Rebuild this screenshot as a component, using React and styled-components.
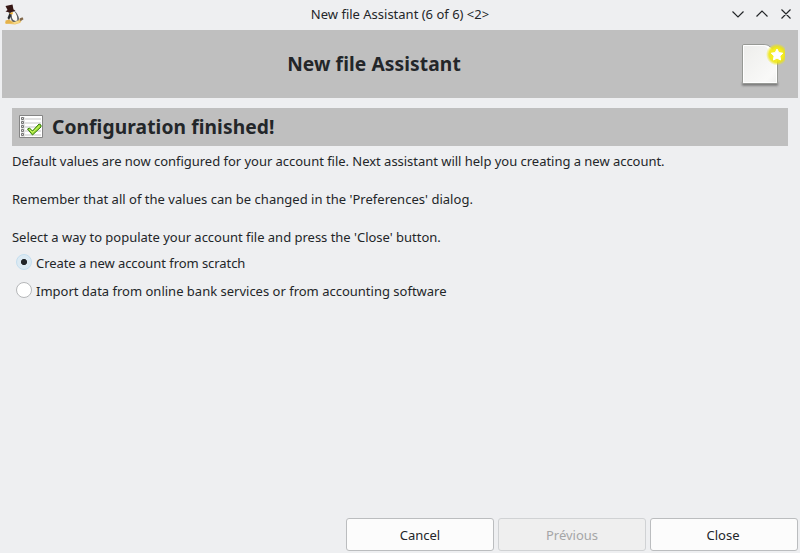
import React, { useState } from "react";
import styled, { createGlobalStyle } from "styled-components";

const GlobalStyle = createGlobalStyle`
  * { box-sizing: border-box; }
  body { margin: 0; background: #eeeff1; overflow: hidden; }
`;

const Window = styled.div`
  display: flex;
  flex-direction: column;
  width: 800px;
  height: 553px;
  padding: 0 2px 2px;
  background: #eeeff1;
  color: #232629;
  font-family: "Noto Sans", sans-serif;
  font-size: 13px;
  line-height: 19px;
`;

const TitleBar = styled.header`
  display: grid;
  grid-template-columns: 68px 1fr 68px;
  align-items: center;
  height: 30px;
`;

const WindowTitle = styled.div`
  text-align: center;
  white-space: nowrap;
  line-height: 18px;
  padding-bottom: 2px;
`;

const AppIcon = styled.svg`
  display: block;
  width: 24px;
  height: 24px;
  margin-bottom: 2px;
`;

const WindowControls = styled.svg`
  display: block;
  width: 68px;
  height: 30px;
`;

const Banner = styled.div`
  display: grid;
  grid-template-columns: 1fr 50px;
  align-items: center;
  height: 68px;
  flex: none;
  background: #bfbfbf;
`;

const BannerTitle = styled.h1`
  margin: 0;
  padding-right: 2px;
  text-align: center;
  font-size: 19.2px;
  letter-spacing: 0.1px;
  line-height: 26px;
  font-weight: 700;
`;

const DocumentIcon = styled.svg`
  display: block;
  width: 48px;
  height: 48px;
  justify-self: start;
  margin-left: -11px;
`;

const Content = styled.main`
  flex: 1;
  padding: 10px;
`;

const SectionHeading = styled.div`
  display: flex;
  align-items: center;
  gap: 9px;
  height: 38px;
  padding-left: 7px;
  background: #bfbfbf;
`;

const ChecklistIcon = styled.svg`
  display: block;
  width: 24px;
  height: 24px;
`;

const SectionTitle = styled.h2`
  margin: 0;
  font-size: 19.2px;
  letter-spacing: 0.1px;
  line-height: 26px;
  font-weight: 700;
`;

const Message = styled.div`
  display: grid;
  gap: 19px;
  padding-top: 6px;
`;

const Paragraph = styled.p`
  margin: 0;
  white-space: nowrap;
  letter-spacing: ${({ $tracking }) => $tracking || "0"};
`;

const Options = styled.div`
  display: grid;
  grid-auto-rows: 28px;
  padding: 1px 0 0 4px;
`;

const Option = styled.label`
  display: flex;
  align-items: center;
  gap: 4px;
  white-space: nowrap;
`;

const OptionText = styled.span`
  padding-top: 2px;
  letter-spacing: ${({ $tracking }) => $tracking || "0"};
`;

const Radio = styled.input.attrs({ type: "radio" })`
  appearance: none;
  width: 16px;
  height: 16px;
  margin: 0;
  border: 1px solid #b5b7b9;
  border-radius: 50%;
  background: #fff;
  &:checked {
    border-color: #c4deef;
    background: radial-gradient(circle, #232629 2.7px, #dceaf3 3.5px);
  }
`;

const Actions = styled.footer`
  display: grid;
  grid-template-columns: repeat(3, 148px);
  justify-content: end;
  gap: 4px;
`;

const Button = styled.button`
  height: 33px;
  padding: 2px 0 0;
  border: 1px solid #bbbdbf;
  border-radius: 3px;
  background: #fcfcfc;
  color: #232629;
  font: inherit;
  &:disabled {
    border-color: #d0d2d4;
    background: #efefef;
    color: #a5a6a7;
  }
  &:last-child { padding-right: 2px; }
`;

const messages = [
  {
    text: "Default values are now configured for your account file. Next assistant will help you creating a new account.",
    tracking: "-0.028px",
  },
  {
    text: "Remember that all of the values can be changed in the 'Preferences' dialog.",
    tracking: "0.024px",
  },
  {
    text: "Select a way to populate your account file and press the 'Close' button.",
    tracking: "-0.015px",
  },
];

const choices = [
  { text: "Create a new account from scratch", tracking: "-0.06px" },
  { text: "Import data from online bank services or from accounting software" },
];

export default function App() {
  const [selected, setSelected] = useState(0);
  return (
    <>
      <GlobalStyle />
      <Window>
        <TitleBar>
          <AppIcon viewBox="2 1 24 24">
            <path d="M5 22.500Q4.500 19.500 9 19.500L15 20 20 18Q22.500 20 20 22L15 23.500Z" fill="#eec66c" />
            <path d="M8.500 11Q10 9 14 9.500Q18.500 13 19 18L17.500 21Q12 22 11 18Z" fill="#5b5e61" />
            <path d="M11.500 11L14.500 10.500Q17.500 14 17.300 19.500Q13.500 21 12 17Z" fill="#fbfaf5" />
            <path d="M5.500 5L12.500 3.500 13.500 8.500 15.500 9.500 10 11.500 5.500 10.500 7.500 9Z" fill="#361715" />
            <path d="M9.500 12L7.500 17 9 19 11 15Z" fill="#292c30" />
            <path d="M9 12.500l4-1.500-.5 2.500z" fill="#f0ac26" />
            <path d="M5.500 19.500l4-1 3 3.500-6.500.8z" fill="#e4b24c" />
            <path d="M13 21.500l5-2 1.500 2-5 1.500z" fill="#f6d988" />
            <path d="M19.500 17.500l3-1.300 1 2-3 2z" fill="#82694b" />
          </AppIcon>
          <WindowTitle>New file Assistant (6 of 6) &lt;2&gt;</WindowTitle>
          <WindowControls viewBox="730 0 68 30" fill="none" stroke="#232629" strokeWidth="1.15">
            <path d="M732.5 11.5l5.5 5.5 5.5-5.5M756.5 16.5l5.5-5.5 5.5 5.5M781.5 9.5l9 9M790.5 9.5l-9 9" />
          </WindowControls>
        </TitleBar>
        <Banner>
          <BannerTitle>New file Assistant</BannerTitle>
          <DocumentIcon viewBox="737 40 48 48">
            <defs>
              <linearGradient id="paper" x1="0" y1="0" x2="1" y2="1">
                <stop stopColor="#ededeb" />
                <stop offset=".8" stopColor="#f9f9f8" />
                <stop offset="1" stopColor="#eeefed" />
              </linearGradient>
              <radialGradient id="glow">
                <stop offset=".5" stopColor="#f5ed22" />
                <stop offset=".72" stopColor="#eee60b" stopOpacity=".85" />
                <stop offset="1" stopColor="#eee60b" stopOpacity="0" />
              </radialGradient>
              <filter id="soft" x="-10%" y="-80%" width="120%" height="260%">
                <feGaussianBlur stdDeviation="1" />
              </filter>
            </defs>
            <path d="M742 82.500h36v3h-36z" fill="#444" opacity=".65" filter="url(#soft)" />
            <path d="M744 44.500h20q4 0 7 3l6.500 7v28q0 1-1 1H743.500q-1 0-1-1V46q0-1.500 1.500-1.500z" fill="url(#paper)" stroke="#979995" />
            <path d="M743.500 45.500h20q4 0 7 3l6 7v27h-33z" fill="none" stroke="#fff" />
            <path d="M765 46q4 2 3 7 4-1 8 4L775 52l-5-5z" fill="#fff" />
            <circle cx="777" cy="54.500" r="11" fill="url(#glow)" />
            <path d="M777 49l1.800 3.600 4 .6-2.900 2.800.7 4-3.600-1.900-3.600 1.900.7-4-2.900-2.800 4-.6z" fill="#fff" stroke="#fff" strokeLinejoin="round" />
          </DocumentIcon>
        </Banner>
        <Content>
          <SectionHeading>
            <ChecklistIcon viewBox="0 0 24 24">
              <path d="M.5.500h23v22H.500z" fill="#fff" stroke="#858585" />
              <path d="M2 2h4v20H2z" fill="#e6e6e6" />
              <path d="M6 3h16v2H6zM6 7h16v2H6zM6 11h16v2H6zM6 15h16v2H6zM6 19h16v2H6z" fill="#e2e2e2" />
              <path d="M2.500 2.500h2v2h-2zM2.500 6.500h2v2h-2zM2.500 10.500h2v2h-2zM2.500 14.500h2v2h-2zM2.500 18.500h2v2h-2z" fill="#ddd" stroke="#777" />
              <path d="M8.500 14l2-1 3 3L20 9l2 1v2l-8.500 8z" fill="#9ddd36" stroke="#347c0c" strokeLinejoin="round" />
              <path d="M10.500 14.500l3 3L20.500 11" fill="none" stroke="#d3f66c" />
            </ChecklistIcon>
            <SectionTitle>Configuration finished!</SectionTitle>
          </SectionHeading>
          <Message>
            {messages.map(({ text, tracking }) => (
              <Paragraph key={text} $tracking={tracking}>{text}</Paragraph>
            ))}
          </Message>
          <Options>
            {choices.map(({ text, tracking }, index) => (
              <Option key={text}>
                <Radio name="source" checked={selected === index} onChange={() => setSelected(index)} />
                <OptionText $tracking={tracking}>{text}</OptionText>
              </Option>
            ))}
          </Options>
        </Content>
        <Actions>
          <Button>Cancel</Button>
          <Button disabled>Prévious</Button>
          <Button>Close</Button>
        </Actions>
      </Window>
    </>
  );
}
